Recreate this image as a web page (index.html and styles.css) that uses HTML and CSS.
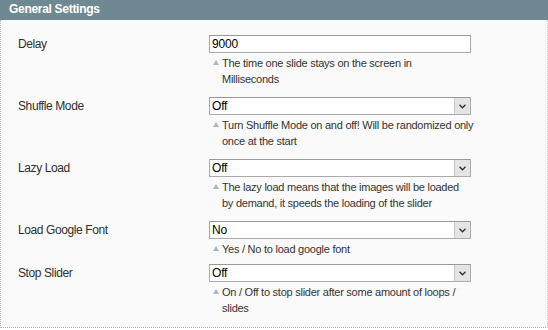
FILE: index.html
```html
<!DOCTYPE html>
<html lang="en">

<head>
    <meta charset="UTF-8">
    <title>General Settings</title>
    <link rel="stylesheet" href="styles.css">
</head>

<body>
    <div class="section">
        <div class="section-head">General Settings</div>
        <div class="fieldset">
            <div class="row">
                <div class="label">Delay</div>
                <div class="value">
                    <div class="input">9000</div>
                    <p class="note">The time one slide stays on the screen in<br>Milliseconds</p>
                </div>
            </div>
            <div class="row">
                <div class="label">Shuffle Mode</div>
                <div class="value">
                    <div class="select">
                        <span class="select-text">Off</span>
                        <span class="select-arrow"><svg width="7" height="5" viewBox="0 0 7 5"><path d="M0.5 0.8 L3.5 3.8 L6.5 0.8" fill="none" stroke="#333" stroke-width="1.4"/></svg></span>
                    </div>
                    <p class="note">Turn Shuffle Mode on and off! Will be randomized only<br>once at the start</p>
                </div>
            </div>
            <div class="row">
                <div class="label">Lazy Load</div>
                <div class="value">
                    <div class="select">
                        <span class="select-text">Off</span>
                        <span class="select-arrow"><svg width="7" height="5" viewBox="0 0 7 5"><path d="M0.5 0.8 L3.5 3.8 L6.5 0.8" fill="none" stroke="#333" stroke-width="1.4"/></svg></span>
                    </div>
                    <p class="note">The lazy load means that the images will be loaded<br>by demand, it speeds the loading of the slider</p>
                </div>
            </div>
            <div class="row row-short">
                <div class="label">Load Google Font</div>
                <div class="value">
                    <div class="select">
                        <span class="select-text">No</span>
                        <span class="select-arrow"><svg width="7" height="5" viewBox="0 0 7 5"><path d="M0.5 0.8 L3.5 3.8 L6.5 0.8" fill="none" stroke="#333" stroke-width="1.4"/></svg></span>
                    </div>
                    <p class="note">Yes / No to load google font</p>
                </div>
            </div>
            <div class="row">
                <div class="label">Stop Slider</div>
                <div class="value">
                    <div class="select">
                        <span class="select-text">Off</span>
                        <span class="select-arrow"><svg width="7" height="5" viewBox="0 0 7 5"><path d="M0.5 0.8 L3.5 3.8 L6.5 0.8" fill="none" stroke="#333" stroke-width="1.4"/></svg></span>
                    </div>
                    <p class="note">On / Off to stop slider after some amount of loops /<br>slides</p>
                </div>
            </div>
        </div>
    </div>
</body>

</html>
```

FILE: styles.css
```css
body {
    margin: 0;
    font-family: Arial, "Liberation Sans", sans-serif;
    font-size: 12px;
    color: #2f2f2f;
    background-color: #fff;
}

.section {
    width: 548px;
}

.section-head {
    height: 20px;
    line-height: 19px;
    padding-left: 9px;
    background-color: #6f8992;
    color: #fff;
    font-size: 12px;
    font-weight: bold;
    letter-spacing: -0.3px;
}

.fieldset {
    height: 308px;
    box-sizing: border-box;
    padding: 15px 0 0 17px;
    background-color: #fafafa;
    border-left: 1px dotted #bbb;
    border-right: 1px dotted #ccc;
    border-bottom: 1px dotted #aaa;
}

.row {
    display: grid;
    grid-template-columns: 191px 262px;
    padding-bottom: 10px;
}

.row-short {
    padding-bottom: 7px;
}

.label {
    padding-top: 2px;
    line-height: 14px;
    letter-spacing: -0.4px;
}

.input,
.select {
    display: flex;
    align-items: center;
    height: 18px;
    box-sizing: border-box;
    border: 1px solid #aaa;
    border-top-color: #999;
    background-color: #fff;
    color: #000;
    font-size: 12px;
    letter-spacing: -0.2px;
}

.input {
    padding-left: 2px;
}

.select-text {
    flex: 1;
    padding-left: 2px;
}

.select-arrow {
    display: flex;
    align-items: center;
    justify-content: center;
    width: 15px;
    height: 16px;
    background-color: #e4e4e4;
    border-left: 1px solid #c8c8c8;
}

.note {
    position: relative;
    margin: 2px 0 0;
    padding-left: 13px;
    font-size: 11px;
    line-height: 16px;
    letter-spacing: -0.25px;
    white-space: nowrap;
    color: #333;
}

.note::before {
    content: "";
    position: absolute;
    left: 4px;
    top: 5px;
    border-left: 3px solid transparent;
    border-right: 3px solid transparent;
    border-bottom: 5px solid #a9b6bf;
}
```
